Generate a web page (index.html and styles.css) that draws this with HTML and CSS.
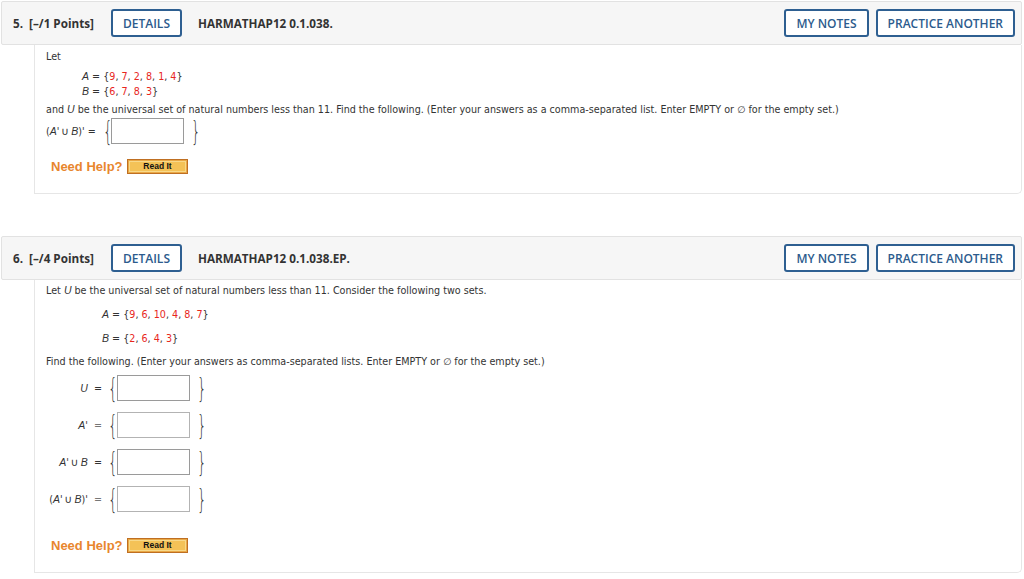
FILE: index.html
```html
<!DOCTYPE html>
<html>
<head>
<meta charset="utf-8">
<link rel="stylesheet" href="styles.css">
</head>
<body>
<div class="page">
  <section class="question q5">
    <header class="qhead">
      <div class="points">5.&nbsp; [–/1 Points]</div>
      <button class="btn details">DETAILS</button>
      <div class="code">HARMATHAP12 0.1.038.</div>
      <div class="spacer"></div>
      <button class="btn">MY NOTES</button>
      <button class="btn">PRACTICE ANOTHER</button>
    </header>
    <div class="qbody">
      <p class="line l-let">Let</p>
      <p class="line set s5a"><span class="var">A</span> = {<span class="num">9</span>, <span class="num">7</span>, <span class="num">2</span>, <span class="num">8</span>, <span class="num">1</span>, <span class="num">4</span>}</p>
      <p class="line set s5b"><span class="var">B</span> = {<span class="num">6</span>, <span class="num">7</span>, <span class="num">8</span>, <span class="num">3</span>}</p>
      <p class="line l-and">and <span class="var">U</span> be the universal set of natural numbers less than 11. Find the following. (Enter your answers as a comma-separated list. Enter EMPTY or ∅ for the empty set.)</p>
      <div class="ans5">
        <span class="lbl">(<span class="var">A</span>'&thinsp;<span class="cup">∪</span>&thinsp;<span class="var">B</span>)' =</span>
        <span class="brace">{</span><span class="box"></span><span class="brace close">}</span>
      </div>
      <div class="help h5">
        <span class="need">Need Help?</span>
        <span class="readit"><span>Read It</span></span>
      </div>
    </div>
  </section>

  <section class="question q6">
    <header class="qhead">
      <div class="points">6.&nbsp; [–/4 Points]</div>
      <button class="btn details">DETAILS</button>
      <div class="code">HARMATHAP12 0.1.038.EP.</div>
      <div class="spacer"></div>
      <button class="btn">MY NOTES</button>
      <button class="btn">PRACTICE ANOTHER</button>
    </header>
    <div class="qbody">
      <p class="line l-let6">Let <span class="var">U</span> be the universal set of natural numbers less than 11. Consider the following two sets.</p>
      <p class="line set6 s6a"><span class="var">A</span> = {<span class="num">9</span>, <span class="num">6</span>, <span class="num">10</span>, <span class="num">4</span>, <span class="num">8</span>, <span class="num">7</span>}</p>
      <p class="line set6 s6b"><span class="var">B</span> = {<span class="num">2</span>, <span class="num">6</span>, <span class="num">4</span>, <span class="num">3</span>}</p>
      <p class="line l-find">Find the following. (Enter your answers as comma-separated lists. Enter EMPTY or ∅ for the empty set.)</p>
      <div class="rows">
        <div class="row"><span class="lbl6"><span class="var">U</span>&nbsp; =</span><span class="brace">{</span><span class="box"></span><span class="brace close">}</span></div>
        <div class="row"><span class="lbl6"><span class="var">A</span>'&nbsp; <span class="eq">=</span></span><span class="brace">{</span><span class="box light"></span><span class="brace close">}</span></div>
        <div class="row"><span class="lbl6"><span class="var">A</span>'&thinsp;<span class="cup">∪</span>&thinsp;<span class="var">B</span>&nbsp; =</span><span class="brace">{</span><span class="box"></span><span class="brace close">}</span></div>
        <div class="row"><span class="lbl6">(<span class="var">A</span>'&thinsp;<span class="cup">∪</span>&thinsp;<span class="var">B</span>)'&nbsp; <span class="eq">=</span></span><span class="brace">{</span><span class="box light"></span><span class="brace close">}</span></div>
      </div>
      <div class="help h6">
        <span class="need">Need Help?</span>
        <span class="readit"><span>Read It</span></span>
      </div>
    </div>
  </section>
</div>
</body>
</html>
```
FILE: styles.css
```css
* { box-sizing: border-box; }
html, body { margin: 0; padding: 0; background: #fff; }
.page {
  padding: 1px 2px 0 1px;
  display: flex;
  flex-direction: column;
}
.question { display: flex; flex-direction: column; }
.q6 { margin-top: 42px; }

.qhead {
  height: 44px;
  display: flex;
  align-items: center;
  background: #f6f6f6;
  border: 1px solid #e2e2e2;
  border-radius: 2px;
  padding: 0 6px 0 11px;
  font-family: "Open Sans", "Liberation Sans", sans-serif;
  font-weight: 600;
  font-size: 11.7px;
  color: #333;
}
.points { width: 98px; font-weight: 700; }
.code { margin-left: 16px; font-weight: 700; }
.spacer { flex: 1; }
.btn {
  height: 28px;
  border: 2px solid #2e5f91;
  border-radius: 3px;
  background: #fff;
  color: #2c5b8d;
  font-family: "Open Sans", "Liberation Sans", sans-serif;
  font-weight: 600;
  font-size: 12px;
  padding: 0 10px;
  margin-left: 7px;
  cursor: pointer;
}
.details { margin-left: 0; width: 71px; padding: 0; }

.qbody {
  margin-left: 33px;
  border: 1px solid #e6e6e6;
  border-top: none;
  border-bottom-right-radius: 5px;
  padding: 0 0 0 11px;
  font-family: "DejaVu Sans", Verdana, sans-serif;
  font-size: 9.6px;
  color: #333;
}
.q5 .qbody { height: 149px; }
.q6 .qbody { height: 293px; }

.line { margin: 0; line-height: 14px; white-space: nowrap; }
.var { font-style: italic; font-family: "Liberation Sans", Arial, sans-serif; font-size: 10.5px; }
.cup { font-size: 11px; }
.num { color: #e8261d; }

.l-let { padding-top: 5px; }
.set { padding-left: 36px; }
.s5a { margin-top: 5px; }
.l-and { margin-top: 3px; }

.ans5 {
  margin-top: 1px;
  display: flex;
  align-items: center;
  height: 26px;
}
.ans5 .lbl { width: 55px; white-space: nowrap; }
.brace {
  display: inline-block;
  width: 10px;
  text-align: center;
  font-family: "DejaVu Sans", sans-serif;
  font-weight: 300;
  font-size: 26px;
  line-height: 26px;
  color: #3a3a3a;
  transform: scaleX(0.55);
}
.box {
  display: inline-block;
  width: 73px;
  height: 26px;
  border: 1px solid #9a9a9a;
  background: #fff;
}
.box.light { border-color: #b3b3b3; }
.ans5 .brace.close { margin-left: 5px; }

.help {
  display: flex;
  align-items: center;
  height: 16px;
}
.h5 { margin-top: 14px; padding-left: 5px; }
.need {
  font-family: "Liberation Sans", Arial, sans-serif;
  font-weight: 700;
  font-size: 13px;
  color: #e8862e;
  width: 76px;
}
.readit {
  display: inline-flex;
  width: 61px;
  height: 15px;
  border: 1px solid #bf6f22;
  background: #e9a846;
  padding: 1px;
}
.readit span {
  flex: 1;
  background: #f4c257;
  border: 1px solid #f8d98a;
  font-family: "Liberation Sans", Arial, sans-serif;
  font-weight: 700;
  font-size: 8.5px;
  line-height: 9px;
  color: #111;
  text-align: center;
}

.l-let6 { padding-top: 3px; }
.set6 { padding-left: 56px; }
.s6a { margin-top: 9px; }
.s6b { margin-top: 9px; }
.l-find { margin-top: 9px; }

.rows {
  margin-top: 6px;
  display: flex;
  flex-direction: column;
  gap: 11px;
}
.row { display: flex; align-items: center; height: 26px; }
.lbl6 { width: 56px; text-align: right; }
.row .brace { margin-left: 4px; margin-right: 1px; }
.row .brace.close { margin-left: 5px; margin-right: 0; }
.eq { color: #777; }
.h6 { margin-top: 25px; padding-left: 5px; }
```
